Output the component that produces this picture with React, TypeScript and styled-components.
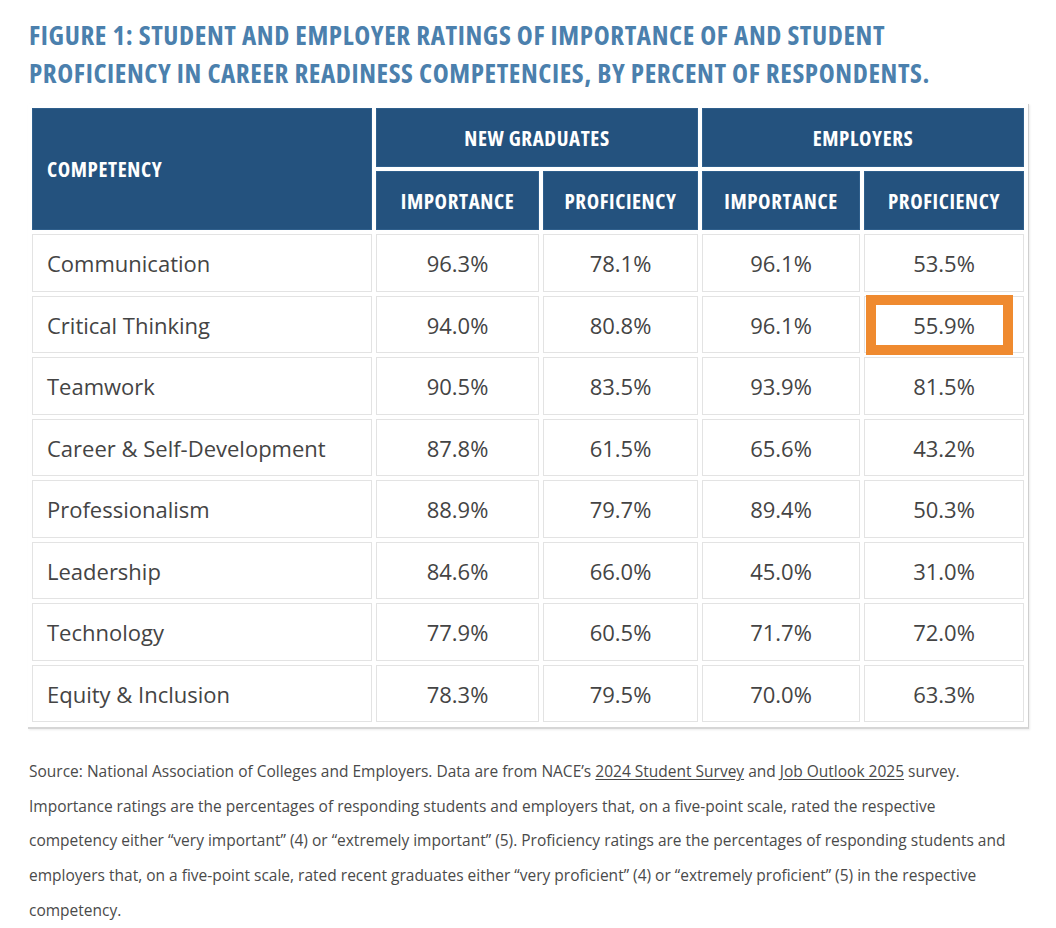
import React from "react";
import styled, { createGlobalStyle } from "styled-components";

const Global = createGlobalStyle`
  html, body { margin: 0; padding: 0; background: #ffffff; }
  body { font-family: "Open Sans", "Liberation Sans", sans-serif; }
`;

const Page = styled.div`
  padding: 16px 0 0 28px;
  width: 1028px;
  box-sizing: border-box;
`;

const Title = styled.h1`
  margin: 0 0 12px 1px;
  font-family: "Open Sans", "Liberation Sans Narrow", sans-serif;
  font-stretch: 75%;
  font-weight: 700;
  font-size: 27px;
  letter-spacing: 0.6px;
  line-height: 38px;
  color: #4b80ad;
  white-space: nowrap;
`;

const Frame = styled.div`
  display: inline-block;
  padding: 4px 4px 5px 4px;
  border-right: 1px solid #cfcfcf;
  border-bottom: 2px solid #d6d6d6;
  box-shadow: 1px 1px 2px rgba(0, 0, 0, 0.08);
`;

const Grid = styled.div`
  display: grid;
  grid-template-columns: 340px 163px 155px 158px 160px;
  grid-template-rows: 59px 59px repeat(8, 57.5px);
  gap: 4px;
`;

const Head = styled.div<{ $left?: boolean; $span?: number; $rows?: number }>`
  background: #24527e;
  color: #ffffff;
  font-family: "Open Sans", "Liberation Sans Narrow", sans-serif;
  font-stretch: 75%;
  font-weight: 700;
  font-size: 21px;
  letter-spacing: 0.6px;
  display: flex;
  align-items: center;
  justify-content: ${(p) => (p.$left ? "flex-start" : "center")};
  padding-left: ${(p) => (p.$left ? "15px" : "0")};
  grid-column: span ${(p) => p.$span ?? 1};
  grid-row: span ${(p) => p.$rows ?? 1};
  box-shadow: inset 0 0 0 1px #2f5f8c;
`;

const Cell = styled.div<{ $left?: boolean }>`
  position: relative;
  background: #ffffff;
  border: 1px solid #e3e3e3;
  color: #444444;
  font-size: 22px;
  font-weight: 500;
  display: flex;
  align-items: center;
  justify-content: ${(p) => (p.$left ? "flex-start" : "center")};
  padding-left: ${(p) => (p.$left ? "14px" : "0")};
  padding-top: 1px;
  box-sizing: border-box;
`;

const Highlight = styled.div`
  position: absolute;
  left: 1px;
  top: -2px;
  width: 147px;
  height: 60px;
  border: 10px solid #ef8a2f;
  box-sizing: border-box;
  pointer-events: none;
`;

const Note = styled.p`
  margin: 25px 0 0 1px;
  font-size: 15.5px;
  font-weight: 500;
  line-height: 34.7px;
  color: #4a4a4a;
  white-space: nowrap;
`;

const Link = styled.span`
  text-decoration: underline;
  text-underline-offset: 2px;
`;

const rows: [string, string, string, string, string][] = [
  ["Communication", "96.3%", "78.1%", "96.1%", "53.5%"],
  ["Critical Thinking", "94.0%", "80.8%", "96.1%", "55.9%"],
  ["Teamwork", "90.5%", "83.5%", "93.9%", "81.5%"],
  ["Career & Self-Development", "87.8%", "61.5%", "65.6%", "43.2%"],
  ["Professionalism", "88.9%", "79.7%", "89.4%", "50.3%"],
  ["Leadership", "84.6%", "66.0%", "45.0%", "31.0%"],
  ["Technology", "77.9%", "60.5%", "71.7%", "72.0%"],
  ["Equity & Inclusion", "78.3%", "79.5%", "70.0%", "63.3%"],
];

export default function App() {
  return (
    <>
      <Global />
      <Page>
        <Title>
          FIGURE 1: STUDENT AND EMPLOYER RATINGS OF IMPORTANCE OF AND STUDENT
          <br />
          PROFICIENCY IN CAREER READINESS COMPETENCIES, BY PERCENT OF RESPONDENTS.
        </Title>
        <Frame>
          <Grid>
            <Head $left $rows={2}>COMPETENCY</Head>
            <Head $span={2}>NEW GRADUATES</Head>
            <Head $span={2}>EMPLOYERS</Head>
            <Head>IMPORTANCE</Head>
            <Head>PROFICIENCY</Head>
            <Head>IMPORTANCE</Head>
            <Head>PROFICIENCY</Head>
            {rows.map((r, i) =>
              r.map((v, j) => (
                <Cell key={`${i}-${j}`} $left={j === 0}>
                  {v}
                  {i === 1 && j === 4 ? <Highlight /> : null}
                </Cell>
              ))
            )}
          </Grid>
        </Frame>
        <Note>
          Source: National Association of Colleges and Employers. Data are from NACE’s{" "}
          <Link>2024 Student Survey</Link> and <Link>Job Outlook 2025</Link> survey.
          <br />
          Importance ratings are the percentages of responding students and employers that, on a five-point scale, rated the respective
          <br />
          competency either “very important” (4) or “extremely important” (5). Proficiency ratings are the percentages of responding students and
          <br />
          employers that, on a five-point scale, rated recent graduates either “very proficient” (4) or “extremely proficient” (5) in the respective
          <br />
          competency.
        </Note>
      </Page>
    </>
  );
}
